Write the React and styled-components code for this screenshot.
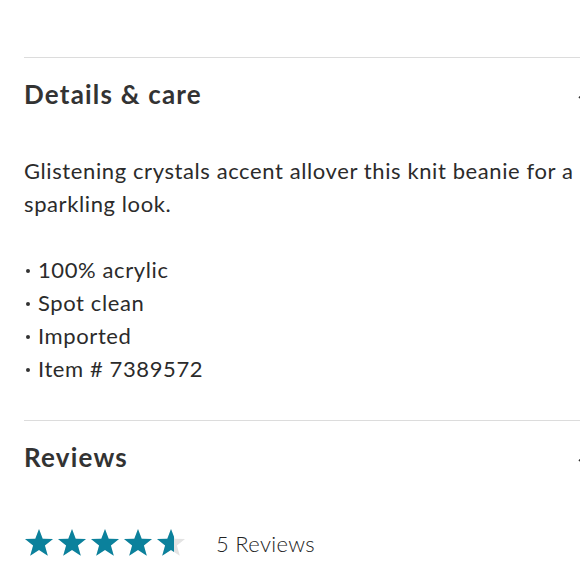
import React from "react";
import styled, { createGlobalStyle } from "styled-components";

const Global = createGlobalStyle`
  html, body { margin: 0; padding: 0; background: #fff; overflow: hidden; }
  body { font-family: Lato, "Open Sans", Arial, sans-serif; color: #333; }
`;

const Page = styled.div`
  padding: 57px 0 0 24px;
  width: 570px;
`;

const Section = styled.section`
  border-top: 1px solid #dcdcdc;
`;

const Header = styled.div`
  height: 72px;
  display: flex;
  align-items: center;
  justify-content: space-between;
`;

const Title = styled.h2`
  margin: 0;
  font-size: 26px;
  font-weight: 700;
  color: #333;
  letter-spacing: 1.2px;
`;

const Chevron = styled.svg`
  width: 16px;
  height: 10px;
  flex: none;
`;

const Body = styled.div`
  padding: 24px 0 35px;
  font-size: 22px;
  line-height: 33px;
  letter-spacing: 0.6px;
  color: #2b2b2b;
`;

const Para = styled.p`
  margin: 0 0 33px;
`;

const List = styled.ul`
  list-style: none;
  margin: 0;
  padding: 0;
`;

const Item = styled.li`
  display: flex;
  align-items: center;
  &::before {
    content: "";
    width: 4px;
    height: 4px;
    border-radius: 50%;
    background: #333;
    margin: 3px 8px 0 2px;
    flex: none;
  }
`;

const RatingRow = styled.div`
  display: flex;
  align-items: center;
  gap: 30px;
  margin-top: 35px;
`;

const Stars = styled.div`
  display: flex;
  gap: 3px;
`;

const Count = styled.span`
  font-size: 22px;
  font-weight: 300;
  letter-spacing: 0.3px;
  color: #222;
`;

const STAR = "M15 1l3.7 9.7 10.3.4-8.1 6.5 2.9 10.1L15 21.9l-8.8 5.8 2.9-10.1L1 11.1l10.3-.4z";

function Star({ fill, id }) {
  return (
    <svg width="30" height="30" viewBox="0 0 30 30">
      <defs>
        <clipPath id={id}>
          <rect x="0" y="0" width={30 * fill} height="30" />
        </clipPath>
      </defs>
      <path d={STAR} fill="#e3e3e3" />
      <path d={STAR} fill="#0b819c" clipPath={`url(#${id})`} />
    </svg>
  );
}

function ChevronUp() {
  return (
    <Chevron viewBox="0 0 16 10">
      <path d="M1 9l7-7 7 7" fill="none" stroke="#333" strokeWidth="1.6" />
    </Chevron>
  );
}

export default function App() {
  const rating = 4.6;
  return (
    <>
      <Global />
      <Page>
        <Section>
          <Header>
            <Title>Details &amp; care</Title>
            <ChevronUp />
          </Header>
          <Body>
            <Para>Glistening crystals accent allover this knit beanie for a sparkling look.</Para>
            <List>
              <Item>100% acrylic</Item>
              <Item>Spot clean</Item>
              <Item>Imported</Item>
              <Item>Item # 7389572</Item>
            </List>
          </Body>
        </Section>
        <Section>
          <Header>
            <Title>Reviews</Title>
            <ChevronUp />
          </Header>
          <RatingRow>
            <Stars>
              {[0, 1, 2, 3, 4].map((i) => (
                <Star key={i} id={`s${i}`} fill={Math.max(0, Math.min(1, rating - i))} />
              ))}
            </Stars>
            <Count>5 Reviews</Count>
          </RatingRow>
        </Section>
      </Page>
    </>
  );
}
